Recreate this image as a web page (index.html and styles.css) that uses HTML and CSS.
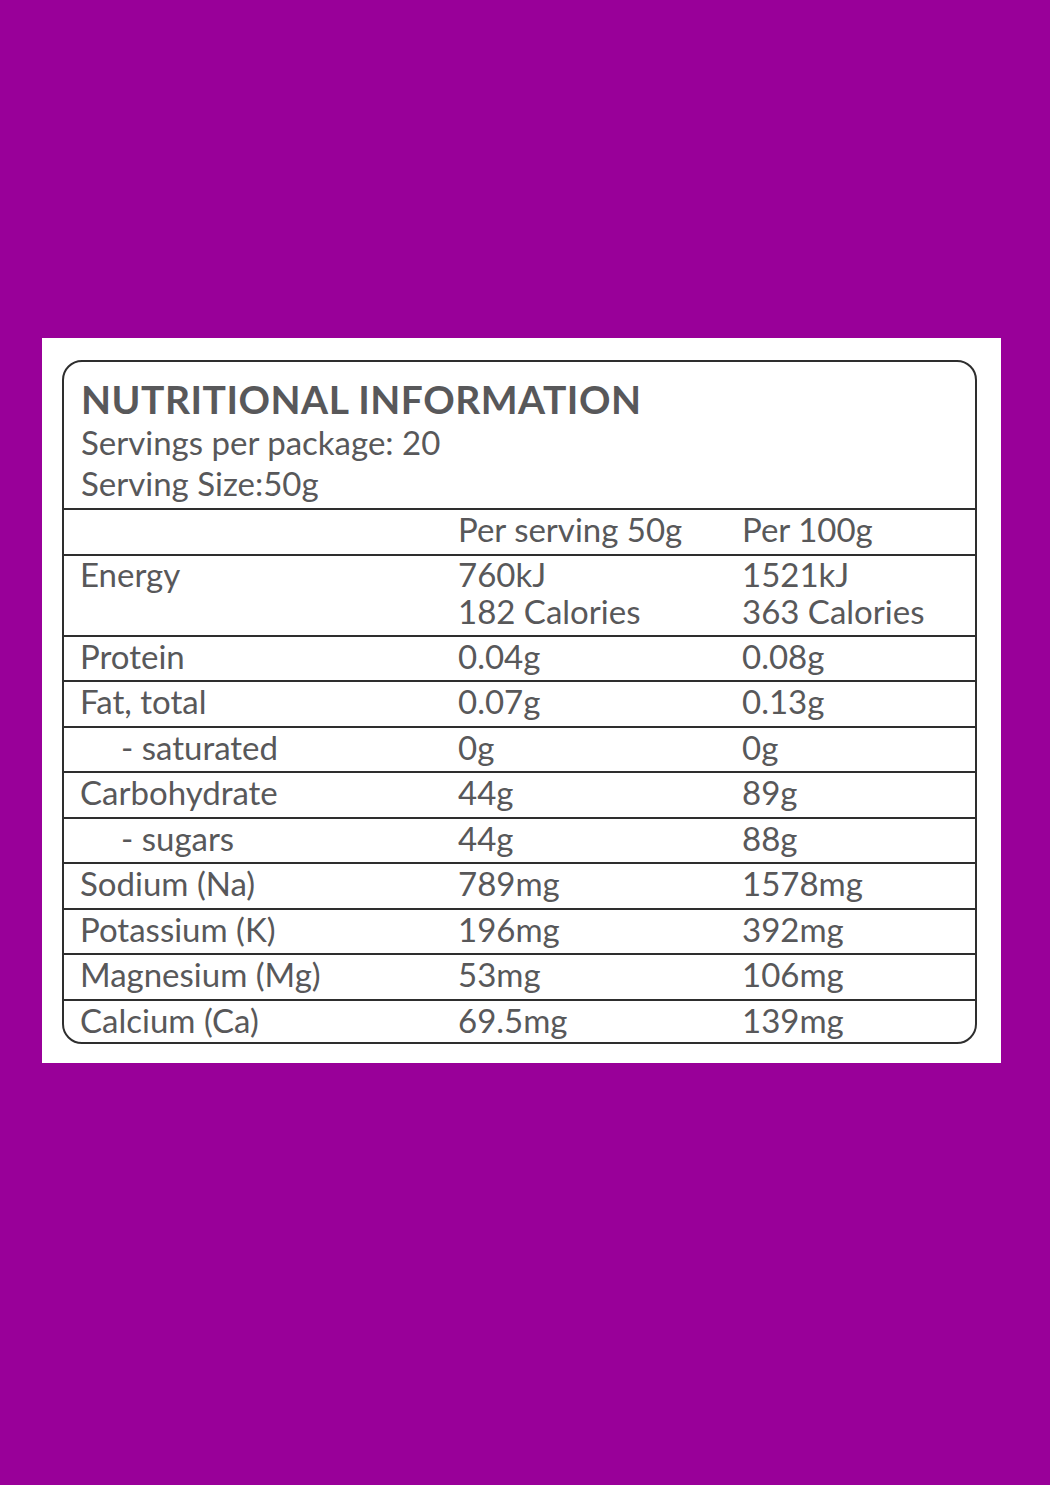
FILE: index.html
```html
<!DOCTYPE html>
<html>
<head>
<meta charset="utf-8">
<link rel="stylesheet" href="styles.css">
</head>
<body>
<div class="page">
  <div class="card">
    <div class="panel">
      <div class="head">
        <div class="title">NUTRITIONAL INFORMATION</div>
        <div class="sub">Servings per package: 20</div>
        <div class="sub">Serving Size:50g</div>
      </div>
      <div class="row">
        <div></div>
        <div>Per serving 50g</div>
        <div>Per 100g</div>
      </div>
      <div class="row tall">
        <div>Energy</div>
        <div>760kJ<br>182 Calories</div>
        <div>1521kJ<br>363 Calories</div>
      </div>
      <div class="row"><div>Protein</div><div>0.04g</div><div>0.08g</div></div>
      <div class="row"><div>Fat, total</div><div>0.07g</div><div>0.13g</div></div>
      <div class="row"><div class="indent">- saturated</div><div>0g</div><div>0g</div></div>
      <div class="row"><div>Carbohydrate</div><div>44g</div><div>89g</div></div>
      <div class="row"><div class="indent">- sugars</div><div>44g</div><div>88g</div></div>
      <div class="row"><div>Sodium (Na)</div><div>789mg</div><div>1578mg</div></div>
      <div class="row"><div>Potassium (K)</div><div>196mg</div><div>392mg</div></div>
      <div class="row"><div>Magnesium (Mg)</div><div>53mg</div><div>106mg</div></div>
      <div class="row last"><div>Calcium (Ca)</div><div>69.5mg</div><div>139mg</div></div>
    </div>
  </div>
</div>
</body>
</html>
```
FILE: styles.css
```css
html, body {
  margin: 0;
  padding: 0;
  background: #990099;
}
.page {
  width: 1050px;
  height: 1485px;
  padding: 338px 0 0 42px;
  box-sizing: border-box;
}
.card {
  width: 959px;
  height: 725px;
  background: #ffffff;
  padding: 22px 24px 0 20px;
  box-sizing: border-box;
}
.panel {
  border: 2px solid #2e2e2e;
  border-radius: 20px;
  overflow: hidden;
  font-family: Lato, "Open Sans", sans-serif;
  color: #58585a;
  font-size: 33px;
}
.head {
  height: 146px;
  padding: 14px 17px 0;
  box-sizing: border-box;
}
.title {
  font-weight: 700;
  font-size: 39px;
  line-height: 46px;
  letter-spacing: 0.5px;
}
.sub {
  line-height: 41px;
}
.row {
  display: grid;
  grid-template-columns: 378px 284px 1fr;
  border-top: 2px solid #2e2e2e;
  height: 45.5px;
  box-sizing: border-box;
  padding-left: 16px;
  line-height: 39px;
  white-space: nowrap;
}
.row.tall {
  height: 81px;
  line-height: 37px;
}
.row.last {
  height: 43px;
}
.indent {
  padding-left: 41px;
}
```
